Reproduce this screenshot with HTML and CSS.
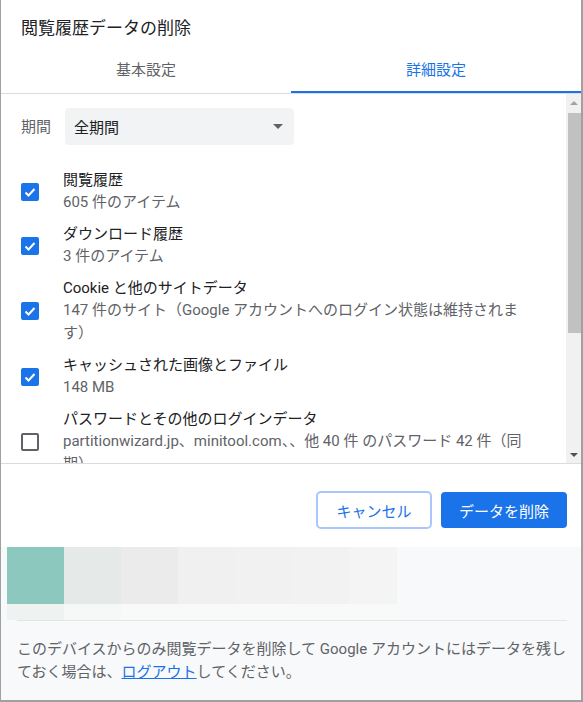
FILE: index.html
```html
<!DOCTYPE html>
<html lang="ja">
<head>
<meta charset="utf-8">
<title>閲覧履歴データの削除</title>
<link rel="stylesheet" href="styles.css">
</head>
<body>
<div class="dialog">
  <div class="title">閲覧履歴データの削除</div>
  <div class="tabs">
    <div class="tab">基本設定</div>
    <div class="tab active">詳細設定</div>
  </div>
  <div class="scroll">
    <div class="content">
      <div class="period">
        <span class="period-label">期間</span>
        <div class="select"><span>全期間</span><span class="arrow"></span></div>
      </div>
      <div class="items">
        <div class="item">
          <span class="cb on"><svg viewBox="0 0 18 18" width="18" height="18"><polyline points="4.5,9.5 7.5,12.5 13.5,6" fill="none" stroke="#fff" stroke-width="2"/></svg></span>
          <div class="text"><div class="label">閲覧履歴</div><div class="sub">605 件のアイテム</div></div>
        </div>
        <div class="item">
          <span class="cb on"><svg viewBox="0 0 18 18" width="18" height="18"><polyline points="4.5,9.5 7.5,12.5 13.5,6" fill="none" stroke="#fff" stroke-width="2"/></svg></span>
          <div class="text"><div class="label">ダウンロード履歴</div><div class="sub">3 件のアイテム</div></div>
        </div>
        <div class="item">
          <span class="cb on"><svg viewBox="0 0 18 18" width="18" height="18"><polyline points="4.5,9.5 7.5,12.5 13.5,6" fill="none" stroke="#fff" stroke-width="2"/></svg></span>
          <div class="text"><div class="label">Cookie と他のサイトデータ</div><div class="sub">147 件のサイト（Google アカウントへのログイン状態は維持されます）</div></div>
        </div>
        <div class="item">
          <span class="cb on"><svg viewBox="0 0 18 18" width="18" height="18"><polyline points="4.5,9.5 7.5,12.5 13.5,6" fill="none" stroke="#fff" stroke-width="2"/></svg></span>
          <div class="text"><div class="label">キャッシュされた画像とファイル</div><div class="sub">148 MB</div></div>
        </div>
        <div class="item">
          <span class="cb off"></span>
          <div class="text"><div class="label">パスワードとその他のログインデータ</div><div class="sub">partitionwizard.jp、minitool.com、、他 40 件 のパスワード 42 件（同期）</div></div>
        </div>
      </div>
    </div>
    <div class="scrollbar">
      <div class="sb-btn"><span class="tri-up"></span></div>
      <div class="sb-track"><div class="sb-thumb"></div></div>
      <div class="sb-btn"><span class="tri-down"></span></div>
    </div>
  </div>
  <div class="actions">
    <button class="btn cancel">キャンセル</button>
    <button class="btn primary">データを削除</button>
  </div>
  <div class="footer">
    <div class="mosaic">
      <span class="m1"></span><span class="m2"></span><span class="m3"></span><span class="m4"></span><span class="m5"></span><span class="m6"></span><span class="m7"></span>
      <span class="n1"></span><span class="n2"></span><span class="n3"></span><span class="n4"></span><span class="n5"></span><span class="n6"></span><span class="n7"></span>
    </div>
    <div class="divider"></div>
    <p class="note">このデバイスからのみ閲覧データを削除して Google アカウントにはデータを残しておく場合は、<a href="#" class="link">ログアウト</a>してください。</p>
  </div>
</div>
</body>
</html>
```

FILE: styles.css
```css
* { box-sizing: border-box; }
html, body { margin: 0; padding: 0; background: #fff; }
body {
  font-family: Roboto, "Noto Sans CJK JP", sans-serif;
  color: #202124;
  font-size: 15px;
}
.dialog {
  width: 583px;
  height: 702px;
  border-left: 1px solid #a0a0a0;
  border-right: 2px solid #a0a0a0;
  border-bottom: 2px solid #a0a0a0;
  display: flex;
  flex-direction: column;
  overflow: hidden;
}
.title {
  padding: 16px 0 0 20px;
  font-size: 17px;
  line-height: 24px;
  height: 40px;
  color: #202124;
}
.tabs {
  display: flex;
  height: 54px;
  border-bottom: 1px solid #dadce0;
}
.tab {
  flex: 1;
  text-align: center;
  padding-top: 19px;
  line-height: 22px;
  color: #5f6368;
  font-size: 15px;
  border-bottom: 2px solid transparent;
}
.tab.active {
  color: #1a73e8;
  border-bottom-color: #1a73e8;
}
.scroll {
  height: 369px;
  display: flex;
}
.content {
  flex: 1;
  overflow: hidden;
  padding: 14px 0 0 20px;
}
.period {
  display: flex;
  align-items: center;
  gap: 14px;
}
.period-label {
  color: #5f6368;
  line-height: 22px;
}
.select {
  width: 229px;
  height: 37px;
  background: #f1f3f4;
  border-radius: 4px;
  display: flex;
  align-items: center;
  justify-content: space-between;
  padding: 0 11px 0 9px;
  color: #202124;
}
.arrow {
  width: 0;
  height: 0;
  border-left: 5px solid transparent;
  border-right: 5px solid transparent;
  border-top: 5px solid #5f6368;
}
.items {
  margin-top: 24px;
  display: flex;
  flex-direction: column;
  gap: 9px;
}
.item {
  display: flex;
  align-items: center;
  gap: 24px;
}
.cb {
  flex: none;
  width: 18px;
  height: 18px;
  border-radius: 2px;
  display: block;
}
.cb svg { display: block; }
.cb.on { background: #1a73e8; }
.cb.off { border: 2px solid #5f6368; }
.text { width: 467px; }
.label { line-height: 22px; color: #202124; }
.sub { line-height: 23px; color: #5f6368; }
.scrollbar {
  width: 15px;
  background: #f1f1f1;
  display: flex;
  flex-direction: column;
}
.sb-btn {
  height: 17px;
  display: flex;
  align-items: center;
  justify-content: center;
}
.tri-up {
  width: 0; height: 0;
  border-left: 4px solid transparent;
  border-right: 4px solid transparent;
  border-bottom: 4px solid #a3a3a3;
}
.tri-down {
  width: 0; height: 0;
  border-left: 4px solid transparent;
  border-right: 4px solid transparent;
  border-top: 4px solid #505050;
}
.sb-track {
  flex: 1;
  padding: 2px 0 0 2px;
}
.sb-thumb {
  height: 220px;
  background: #c1c1c1;
}
.actions {
  border-top: 1px solid #dadce0;
  padding: 27px 14px 18px 0;
  display: flex;
  justify-content: flex-end;
  align-items: center;
  gap: 9px;
}
.btn {
  font-family: Roboto, "Noto Sans CJK JP", sans-serif;
  font-size: 15px;
  border-radius: 4px;
  cursor: pointer;
  padding: 0;
}
.cancel {
  width: 116px;
  height: 38px;
  background: #fff;
  color: #1a73e8;
  border: 2px solid #a8c7fa;
  border-radius: 5px;
}
.primary {
  width: 126px;
  height: 36px;
  background: #1a73e8;
  color: #fff;
  border: none;
}
.footer {
  flex: 1;
  background: #f8f9fa;
}
.mosaic {
  margin-left: 6px;
  display: grid;
  grid-template-columns: 57px 57px 57px 57px 57px 57px 48px;
  grid-template-rows: 57px 16px;
}
.mosaic span { display: block; }
.m1 { background: #8cc8be; }
.m2 { background: #e5eae9; }
.m3 { background: #ebebeb; }
.m4 { background: #f0f0f0; }
.m5 { background: #f1f1f1; }
.m6 { background: #f2f2f2; }
.m7 { background: #f4f4f4; }
.n1 { background: #eef3f2; }
.n2 { background: #f6f7f7; }
.n3, .n4, .n5, .n6, .n7 { background: #f8f9f9; }
.divider {
  height: 1px;
  background: #e3e5e8;
  margin: 0 14px 0 16px;
}
.note {
  margin: 0;
  padding: 17px 6px 0 16px;
  line-height: 23px;
  color: #5f6368;
  font-size: 15px;
}
.link {
  color: #1a73e8;
  text-decoration: underline;
}
```
